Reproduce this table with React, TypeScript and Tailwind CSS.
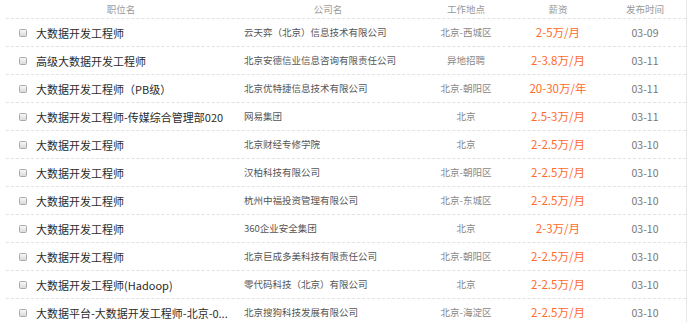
type Job = {
  title: string
  company: string
  location: string
  salary: string
  date: string
}

const jobs: Job[] = [
  { title: '大数据开发工程师', company: '云天弈（北京）信息技术有限公司', location: '北京-西城区', salary: '2-5万/月', date: '03-09' },
  { title: '高级大数据开发工程师', company: '北京安德信业信息咨询有限责任公司', location: '异地招聘', salary: '2-3.8万/月', date: '03-11' },
  { title: '大数据开发工程师（PB级）', company: '北京优特捷信息技术有限公司', location: '北京-朝阳区', salary: '20-30万/年', date: '03-11' },
  { title: '大数据开发工程师-传媒综合管理部020', company: '网易集团', location: '北京', salary: '2.5-3万/月', date: '03-11' },
  { title: '大数据开发工程师', company: '北京财经专修学院', location: '北京', salary: '2-2.5万/月', date: '03-10' },
  { title: '大数据开发工程师', company: '汉柏科技有限公司', location: '北京-朝阳区', salary: '2-2.5万/月', date: '03-10' },
  { title: '大数据开发工程师', company: '杭州中福投资管理有限公司', location: '北京-东城区', salary: '2-2.5万/月', date: '03-10' },
  { title: '大数据开发工程师', company: '360企业安全集团', location: '北京', salary: '2-3万/月', date: '03-10' },
  { title: '大数据开发工程师', company: '北京巨成多美科技有限责任公司', location: '北京-朝阳区', salary: '2-2.5万/月', date: '03-10' },
  { title: '大数据开发工程师(Hadoop)', company: '零代码科技（北京）有限公司', location: '北京', salary: '2-2.5万/月', date: '03-10' },
  { title: '大数据平台-大数据开发工程师-北京-0...', company: '北京搜狗科技发展有限公司', location: '北京-海淀区', salary: '2-2.5万/月', date: '03-10' },
]

const cols = 'grid grid-cols-[230px_184px_92px_92px_82px]'

export default function App() {
  return (
    <div className="h-[322px] w-[697px] overflow-hidden bg-white font-['Noto_Sans_CJK_SC','Noto_Sans',sans-serif]">
      <div className="ml-[6px] w-[681px] border-r border-[#e6e6e6]">
        <div className={`${cols} h-[19px] items-end pb-[4px] border-b border-dashed border-[#e2e2e2] text-[9.5px] leading-none text-[#999]`}>
          <div className="text-center">职位名</div>
          <div className="text-center">公司名</div>
          <div className="text-center">工作地点</div>
          <div className="text-center">薪资</div>
          <div className="text-center">发布时间</div>
        </div>
        {jobs.map((job, i) => (
          <div
            key={i}
            className={`${cols} h-[28px] items-center border-b border-dashed border-[#e2e2e2] pt-[1px] leading-none`}
          >
            <div className="flex items-center">
              <span className="ml-[13px] mr-[9px] size-[8px] shrink-0 rounded-[1.5px] border border-[#a9a9a9] bg-gradient-to-b from-[#f8f8f8] to-[#dadada]" />
              <span className="whitespace-nowrap text-[11px] text-[#2b2b2b]">{job.title}</span>
            </div>
            <div className="whitespace-nowrap pl-[8px] text-[9.5px] text-[#555]">{job.company}</div>
            <div className="text-center text-[9.5px] text-[#888]">{job.location}</div>
            <div className="text-center text-[11.5px] text-[#ff6a2b]">{job.salary}</div>
            <div className="text-center text-[10.5px] text-[#777]">{job.date}</div>
          </div>
        ))}
      </div>
    </div>
  )
}
